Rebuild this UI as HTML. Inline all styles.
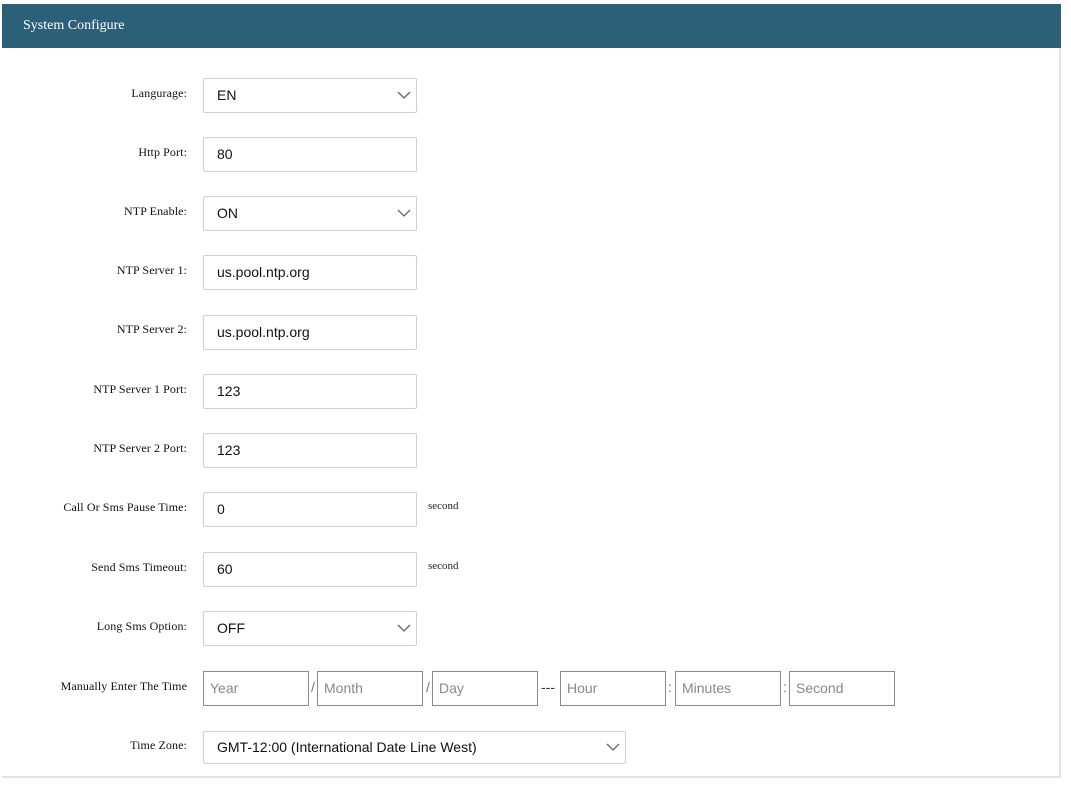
<!DOCTYPE html>
<html><head><meta charset="utf-8"><style>
*{box-sizing:border-box;margin:0;padding:0}
body{width:1071px;height:790px;background:#fff;position:relative;overflow:hidden;font-family:"Liberation Sans",sans-serif}
.hdr{position:absolute;left:2px;top:4px;width:1059px;height:44px;background:#2c6079;color:#fff;font-family:"Liberation Serif",serif;font-size:14px;line-height:44px;padding-left:21px}
.pr{position:absolute;left:1059px;top:48px;width:2px;height:730px;background:#e3e3e3}
.pb{position:absolute;left:2px;top:776px;width:1059px;height:2px;background:#e3e3e3}
.lb{position:absolute;right:884px;font-family:"Liberation Serif",serif;font-size:12px;color:#111;white-space:nowrap;letter-spacing:0.1px}
.in{position:absolute;left:203px;width:214px;height:35px;border:1px solid #cfcfcf;border-radius:2px;font-size:14px;color:#111;padding-left:13px;line-height:33px}
.sel svg{position:absolute;right:5px;top:12px}
.sec{position:absolute;left:428px;font-family:"Liberation Serif",serif;font-size:11px;color:#222}
.t{position:absolute;top:671px;height:35px;width:106px;border:1px solid #8a8a8a;font-size:14px;color:#888;padding-left:6px;line-height:33px}
.sp{position:absolute;top:679px;font-size:14px;color:#777}
</style></head><body>
<div class="hdr">System Configure</div>
<div class="pr"></div><div class="pb"></div>

<div class="lb" style="top:86px">Langurage:</div>
<div class="in sel" style="top:78px">EN<svg width="14" height="9" viewBox="0 0 14 9"><path d="M1 1l6 6 6-6" fill="none" stroke="#666" stroke-width="1.3"/></svg></div>

<div class="lb" style="top:145px">Http Port:</div>
<div class="in" style="top:137px">80</div>

<div class="lb" style="top:204px">NTP Enable:</div>
<div class="in sel" style="top:196px">ON<svg width="14" height="9" viewBox="0 0 14 9"><path d="M1 1l6 6 6-6" fill="none" stroke="#666" stroke-width="1.3"/></svg></div>

<div class="lb" style="top:263px">NTP Server 1:</div>
<div class="in" style="top:255px">us.pool.ntp.org</div>

<div class="lb" style="top:322px">NTP Server 2:</div>
<div class="in" style="top:315px">us.pool.ntp.org</div>

<div class="lb" style="top:382px">NTP Server 1 Port:</div>
<div class="in" style="top:374px">123</div>

<div class="lb" style="top:441px">NTP Server 2 Port:</div>
<div class="in" style="top:433px">123</div>

<div class="lb" style="top:500px">Call Or Sms Pause Time:</div>
<div class="in" style="top:492px">0</div>
<div class="sec" style="top:500px">second</div>

<div class="lb" style="top:560px">Send Sms Timeout:</div>
<div class="in" style="top:552px">60</div>
<div class="sec" style="top:560px">second</div>

<div class="lb" style="top:619px">Long Sms Option:</div>
<div class="in sel" style="top:611px">OFF<svg width="14" height="9" viewBox="0 0 14 9"><path d="M1 1l6 6 6-6" fill="none" stroke="#666" stroke-width="1.3"/></svg></div>

<div class="lb" style="top:679px">Manually Enter The Time</div>
<div class="t" style="left:203px">Year</div>
<div class="sp" style="left:311px">/</div>
<div class="t" style="left:317px">Month</div>
<div class="sp" style="left:426px">/</div>
<div class="t" style="left:432px">Day</div>
<div class="sp" style="left:541px;color:#333">---</div>
<div class="t" style="left:560px">Hour</div>
<div class="sp" style="left:668px">:</div>
<div class="t" style="left:675px">Minutes</div>
<div class="sp" style="left:783px">:</div>
<div class="t" style="left:789px">Second</div>

<div class="lb" style="top:738px">Time Zone:</div>
<div class="in sel" style="top:731px;width:423px;height:33px;line-height:31px">GMT-12:00 (International Date Line West)<svg width="14" height="9" viewBox="0 0 14 9" style="top:11px"><path d="M1 1l6 6 6-6" fill="none" stroke="#666" stroke-width="1.3"/></svg></div>
</body></html>
